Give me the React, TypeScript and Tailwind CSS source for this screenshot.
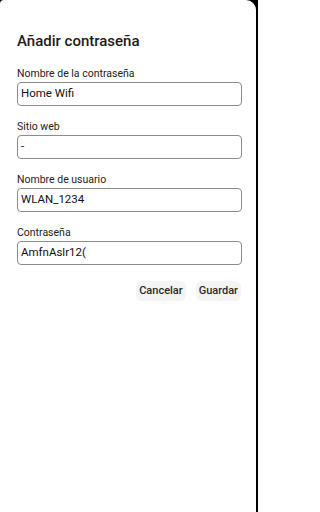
export default function App() {
  const fields = [
    { label: "Nombre de la contraseña", value: "Home Wifi" },
    { label: "Sitio web", value: "-" },
    { label: "Nombre de usuario", value: "WLAN_1234" },
    { label: "Contraseña", value: "AmfnAslr12(" },
  ];

  return (
    <main className="h-[512px] w-[258px] bg-black" style={{ fontFamily: "Roboto, 'Noto Sans', sans-serif" }}>
      <section className="h-full w-[256px] rounded-tl-[4px] rounded-tr-[10px] bg-white px-[17px] pt-[31px]">
        <h1 className="text-[15px] leading-[20px] font-medium text-[#1c1c1c]">Añadir contraseña</h1>

        <div className="mt-[16px] flex flex-col gap-[14px]">
          {fields.map((f) => (
            <div key={f.label} className="flex flex-col">
              <label className="text-[10.5px] leading-[14px] text-[#222]">{f.label}</label>
              <div className="mt-[1px] flex h-[24px] w-[225px] items-center rounded-[4px] border border-[#8c8c8c] px-[3px] text-[11.5px] text-[#111]">
                {f.value}
              </div>
            </div>
          ))}
        </div>

        <div className="-mr-[2px] mt-[16px] flex justify-end gap-[10px]">
          <button className="h-[20px] rounded-[6px] bg-[#f4f4f4] px-[3px] text-[11px] font-medium text-[#2a2a2a]">Cancelar</button>
          <button className="h-[20px] rounded-[6px] bg-[#f4f4f4] px-[3px] text-[11px] font-medium text-[#2a2a2a]">Guardar</button>
        </div>
      </section>
    </main>
  );
}
